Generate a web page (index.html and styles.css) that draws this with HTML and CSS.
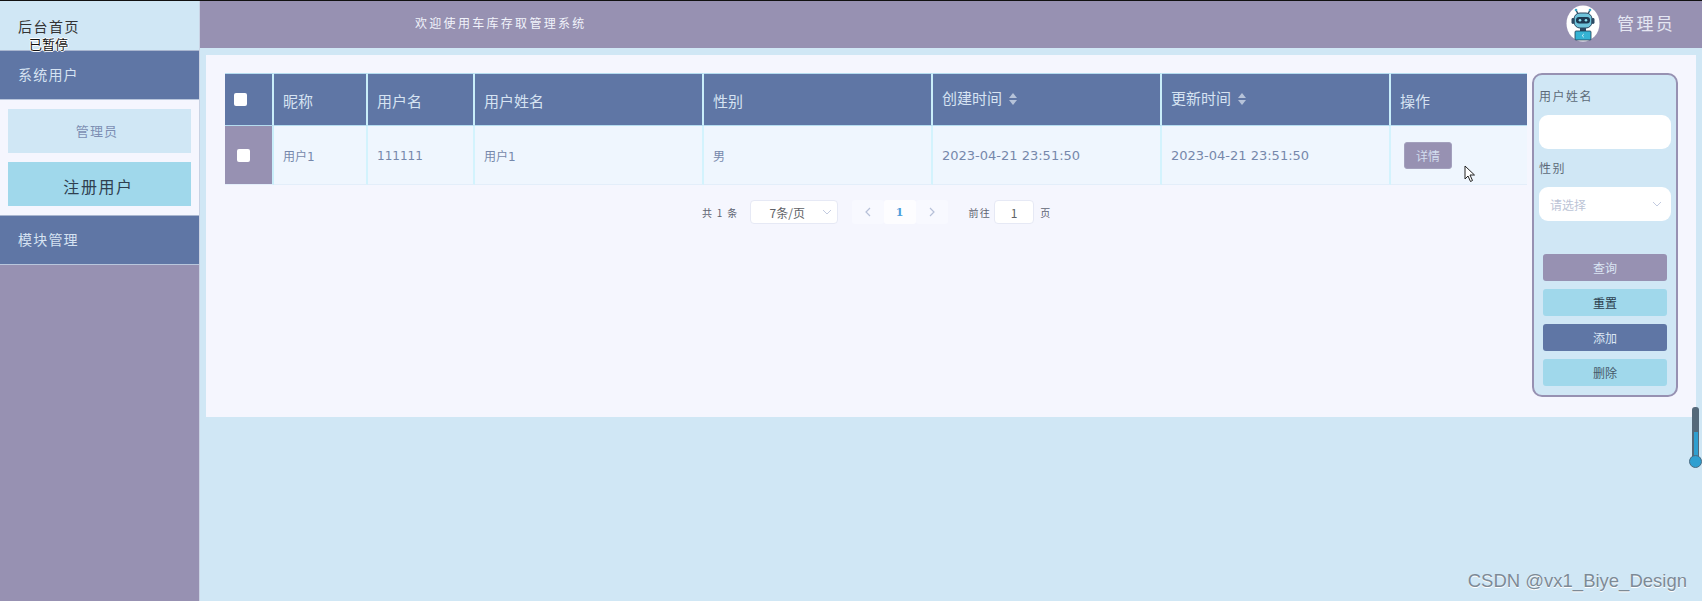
FILE: index.html
```html
<!DOCTYPE html>
<html lang="zh">
<head>
<meta charset="utf-8">
<title>车库存取管理系统</title>
<link rel="stylesheet" href="styles.css">
</head>
<body>
<div class="app">
  <aside class="sidebar">
    <div class="brand">后台首页</div>
    <div class="menu-title">系统用户</div>
    <div class="submenu">
      <div class="subitem subitem-light">管理员</div>
      <div class="subitem subitem-cyan">注册用户</div>
    </div>
    <div class="menu-title menu-title-last">模块管理</div>
    <div class="sidebar-fill"></div>
  </aside>
  <div class="content">
    <header class="topbar">
      <div class="welcome">欢迎使用车库存取管理系统</div>
      <div class="account">
        <svg class="avatar" viewBox="0 0 34 37" width="34" height="37">
          <ellipse cx="17" cy="18.5" rx="16.5" ry="18" fill="#fff"/>
          <path d="M10 5l2 4M24 5l-2 4" stroke="#2c4a63" stroke-width="1.4"/>
          <circle cx="10" cy="5" r="1.3" fill="#3aa7c8"/><circle cx="24" cy="5" r="1.3" fill="#3aa7c8"/>
          <rect x="8" y="8" width="18" height="15" rx="6" fill="#6ec3da" stroke="#2c4a63"/>
          <rect x="5.5" y="13" width="3" height="6" rx="1.4" fill="#2c4a63"/><rect x="25.5" y="13" width="3" height="6" rx="1.4" fill="#2c4a63"/>
          <rect x="10" y="12" width="14" height="6.5" rx="3" fill="#1e3a52"/>
          <circle cx="14" cy="15.2" r="1.3" fill="#8fe3f2"/><circle cx="20" cy="15.2" r="1.3" fill="#8fe3f2"/>
          <path d="M14 23h6v3h-6z" fill="#2c4a63"/>
          <rect x="9" y="26" width="16" height="9" rx="1" fill="#35b3d3" stroke="#1e3a52" stroke-width=".8"/>
          <path d="M17.8 29l-1.6 1.6 1.6 1.6" fill="none" stroke="#fff" stroke-width=".8"/>
        </svg>
        <span class="account-name">管理员</span>
      </div>
    </header>
    <main class="main">
      <section class="panel">
        <div class="list">
          <table class="table">
            <thead>
              <tr>
                <th class="col-check"><span class="check check-head"></span></th>
                <th class="col-nick">昵称</th>
                <th class="col-user">用户名</th>
                <th class="col-name">用户姓名</th>
                <th class="col-sex">性别</th>
                <th class="col-time sortable">创建时间<span class="sort"></span></th>
                <th class="col-time sortable">更新时间<span class="sort"></span></th>
                <th class="col-op">操作</th>
              </tr>
            </thead>
            <tbody>
              <tr>
                <td class="cell-check"><span class="check"></span></td>
                <td>用户1</td>
                <td>111111</td>
                <td>用户1</td>
                <td>男</td>
                <td class="cell-time">2023-04-21 23:51:50</td>
                <td class="cell-time">2023-04-21 23:51:50</td>
                <td><button class="detail" type="button">详情</button></td>
              </tr>
            </tbody>
          </table>
          <nav class="pager">
            <span class="pager-text">共 1 条</span>
            <span class="page-size">7条/页<svg class="chev" viewBox="0 0 10 6" width="10" height="6"><path d="M1 1l4 4 4-4" fill="none" stroke="#c3cbe0" stroke-width="1"/></svg></span>
            <span class="pages">
              <span class="page-btn"><svg viewBox="0 0 6 10" width="6" height="10"><path d="M5 1L1 5l4 4" fill="none" stroke="#b6c0d8" stroke-width="1.2"/></svg></span>
              <span class="page-btn page-current">1</span>
              <span class="page-btn"><svg viewBox="0 0 6 10" width="6" height="10"><path d="M1 1l4 4-4 4" fill="none" stroke="#b6c0d8" stroke-width="1.2"/></svg></span>
            </span>
            <span class="pager-text goto">前往</span>
            <span class="page-input">1</span>
            <span class="pager-text">页</span>
          </nav>
        </div>
        <form class="search">
          <div class="search-label">用户姓名</div>
          <div class="search-input"></div>
          <div class="search-label search-label-sex">性别</div>
          <div class="search-input search-select">请选择<svg class="chev" viewBox="0 0 10 6" width="10" height="6"><path d="M1 1l4 4 4-4" fill="none" stroke="#c3cbe0" stroke-width="1"/></svg></div>
          <div class="actions">
            <button class="act act-purple" type="button">查询</button>
            <button class="act act-cyan" type="button">重置</button>
            <button class="act act-blue" type="button">添加</button>
            <button class="act act-cyan act-dim" type="button">删除</button>
          </div>
        </form>
      </section>
    </main>
  </div>
</div>
<div class="paused">已暂停</div>
<svg class="cursor" viewBox="0 0 12 18" width="12" height="18"><path d="M1 1v13l3-3 2.500 5.500 2-1L6 10h4.500z" fill="#fff" stroke="#222" stroke-width="1"/></svg>
<div class="thermo"><div class="thermo-fill"></div><div class="thermo-bulb"></div></div>
<div class="watermark">CSDN @vx1_Biye_Design</div>
</body>
</html>
```
FILE: styles.css
```css
* { box-sizing: border-box; }
html, body { margin: 0; height: 100%; overflow: hidden; }
body {
  border-top: 1px solid #111;
  background: #d0e7f5;
  font-family: "Noto Sans CJK SC", "Liberation Sans", sans-serif;
  position: relative;
}
.app { display: flex; height: 600px; }

/* Sidebar */
.sidebar { width: 200px; flex: none; display: flex; flex-direction: column; border-right: 1px solid #c9d3e4; background: #9791b2; }
.brand { height: 49px; background: #d0e7f5; color: #333; font-size: 14px; letter-spacing: 1.5px; padding: 17px 0 0 18px; line-height: 16px; }
.menu-title { height: 50px; background: #5f76a5; color: #d6e3f2; font-size: 14px; letter-spacing: 1.2px; line-height: 46px; padding-left: 18px; border-top: 1px solid #a9b6cf; border-bottom: 1px solid #b9c6dc; }
.submenu { height: 115px; background: #f5f6fe; padding: 9px 8px; display: flex; flex-direction: column; gap: 9px; }
.subitem { height: 44px; display: flex; align-items: center; justify-content: center; }
.subitem-light { background: #d0e7f5; color: #7d8fb3; font-size: 13px; letter-spacing: 1.2px; padding: 0 5px 2px 0; }
.subitem-cyan { background: #a0d8eb; color: #2f4050; font-size: 16px; letter-spacing: 1.6px; padding: 3px 2px 0 0; }
.sidebar-fill { flex: 1; }

/* Top bar */
.content { flex: 1; min-width: 0; display: flex; flex-direction: column; }
.topbar { height: 47px; background: #9791b2; display: flex; align-items: center; justify-content: space-between; padding: 0 27px 4px 215px; }
.welcome { color: #f1f3fb; font-size: 12px; letter-spacing: 2.3px; }
.account { display: flex; align-items: center; gap: 17px; padding-top: 2px; }
.avatar { display: block; }
.account-name { color: #e4e6f2; font-size: 17px; letter-spacing: 2.3px; margin-top: -2px; }

/* Main */
.main { flex: 1; padding: 7px 6px 0 6px; }
.panel { height: 362px; background: #f5f6fe; padding: 18px 18px 0 19px; display: flex; gap: 5px; align-items: flex-start; }
.list { width: 1302px; flex: none; }

/* Table */
.table { width: 1302px; table-layout: fixed; border-collapse: separate; border-spacing: 0; }
.col-check { width: 49px; }
.col-nick { width: 94px; }
.col-user { width: 107px; }
.col-name { width: 229px; }
.col-sex { width: 229px; }
.col-time { width: 229px; }
.col-op { width: 136px; }
.table th { height: 53px; background: #5f76a5; color: #d6e3f2; font-size: 15px; font-weight: 400; text-align: left; padding: 2px 0 0 9px; border-right: 2px solid #c9eefa; border-top: 1px solid #b5dcef; border-bottom: 1px solid #b5dcef; }
.table th:last-child { border-right: 0; }
.table th.sortable { padding-top: 0; padding-bottom: 5px; }
.table td { height: 59px; background: #eff6fe; color: #7688ab; font-family: "DejaVu Sans", "Noto Sans CJK SC", sans-serif; font-size: 12px; padding: 1px 0 0 9px; border-right: 2px solid #d3f3fd; border-bottom: 1px solid #e3eefa; }
.table td.cell-time { font-size: 13px; }
.table td:last-child { border-right: 0; padding-left: 13px; }
.table td.cell-check { background: #9791b2; padding: 0 0 0 12px; border-right-color: #c9eefa; }
.table th.col-check { padding: 0 0 0 9px; }
.check { display: block; width: 13px; height: 13px; background: #fff; border-radius: 2px; }
.sort { display: inline-block; width: 9px; height: 12px; margin-left: 7px; vertical-align: -1px; position: relative; }
.sort::before, .sort::after { content: ""; position: absolute; left: 0; border-left: 4.500px solid transparent; border-right: 4.500px solid transparent; }
.sort::before { top: 0; border-bottom: 5px solid #b6c3d9; }
.sort::after { bottom: 0; border-top: 5px solid #b6c3d9; }
.detail { width: 48px; height: 27px; border: 1px solid #a3a0bd; border-radius: 3px; background: #9791b2; color: #d3deef; font-size: 12px; font-family: inherit; padding: 0; display: block; margin-top: -1px; }

/* Pagination */
.pager { display: flex; align-items: center; height: 24px; margin-top: 15px; padding-left: 477px; font-size: 10px; color: #5f6472; }
.pager-text { font-size: 10px; letter-spacing: 1.300px; }
.page-size { width: 88px; height: 24px; margin-left: 11px; background: #fff; border: 1px solid #e6e9f5; border-radius: 4px; display: flex; align-items: center; justify-content: space-between; padding: 0 5px 0 19px; font-size: 12px; color: #606266; }
.pages { display: flex; margin-left: 14px; height: 24px; }
.page-btn { width: 32px; background: #f8f9ff; display: flex; align-items: center; justify-content: center; border-radius: 3px; }
.page-current { background: #fdfdff; color: #4f9fdc; font-family: "DejaVu Serif", serif; font-size: 11px; font-weight: 700; }
.goto { margin-left: 21px; }
.page-input { width: 40px; height: 24px; margin: 0 6px 0 3px; background: #fff; border: 1px solid #e6e9f5; border-radius: 4px; display: flex; align-items: center; justify-content: center; font-size: 12px; color: #606266; }

/* Search */
.search { width: 146px; height: 324px; flex: none; background: #d0e7f5; border: 2px solid #9791b2; border-radius: 10px; padding: 12px 5px 0; }
.search-label { color: #5d6a78; font-size: 12px; letter-spacing: 1.500px; line-height: 18px; height: 18px; }
.search-label-sex { margin-top: 10px; }
.search-input { height: 34px; margin-top: 10px; background: #fff; border-radius: 9px; }
.search-select { display: flex; align-items: center; justify-content: space-between; padding: 0 9px 0 11px; color: #bcc4d6; font-size: 12px; }
.actions { display: flex; flex-direction: column; gap: 8px; margin-top: 33px; padding: 0 4px; }
.act { height: 27px; border: 0; border-radius: 3px; font-size: 12px; font-family: inherit; padding: 0; }
.act-purple { background: #9791b2; color: #dbe6f4; }
.act-cyan { background: #a0d8eb; color: #2c3e4d; }
.act-dim { color: #46586a; }
.act-blue { background: #5f76a5; color: #dbe6f4; }

/* Overlays */
.paused { position: absolute; left: 29px; top: 36px; color: #111; font-size: 13px; line-height: 13px; text-shadow: 0 0 1px #fff, 1px 0 0 #fff, -1px 0 0 #fff, 0 1px 0 #fff, 0 -1px 0 #fff; }
.cursor { position: absolute; left: 1464px; top: 164px; }
.thermo { position: absolute; left: 1692px; top: 406px; width: 7px; height: 55px; background: #55697a; border-radius: 3px 3px 0 0; }
.thermo-fill { position: absolute; left: 2px; right: 1px; bottom: 0; height: 30px; background: #2f9fd0; }
.thermo-bulb { position: absolute; left: -3px; top: 48px; width: 13px; height: 13px; border-radius: 50%; background: #2f9fd0; border: 1px solid #4a6a80; }
.watermark { position: absolute; right: 15px; top: 569px; color: #7d8a96; font-family: "Liberation Sans", sans-serif; font-size: 18.500px; text-shadow: 0 1px 0 #fff; }
```
